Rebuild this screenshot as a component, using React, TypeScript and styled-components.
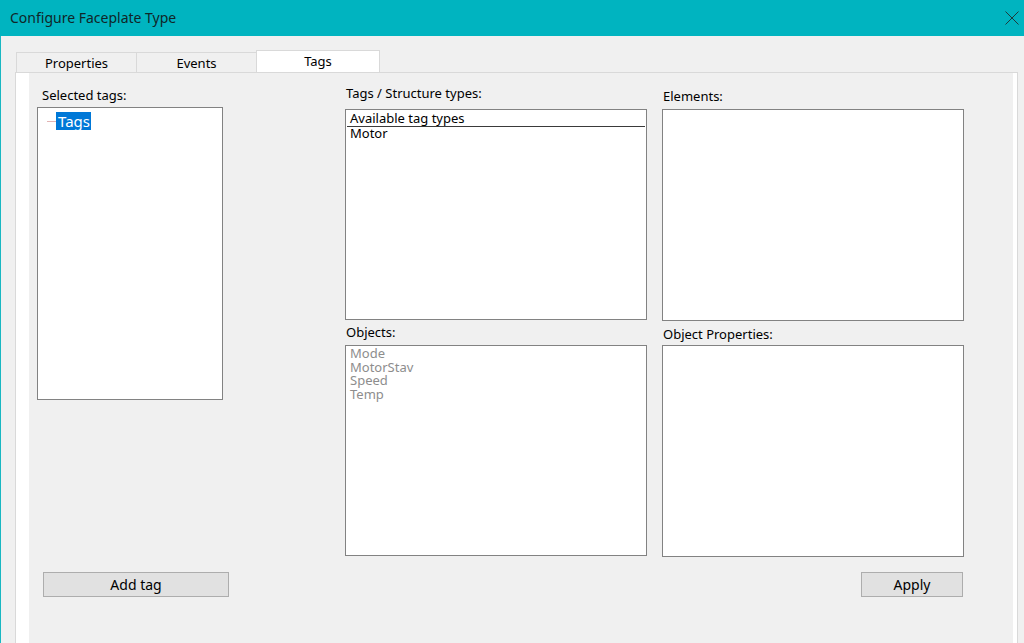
import styled, { createGlobalStyle } from 'styled-components';

const GlobalStyle = createGlobalStyle`
  html, body {
    margin: 0;
    padding: 0;
    background: #f0f0f0;
    overflow: hidden;
  }
  body {
    font-family: 'Noto Sans', 'Segoe UI', sans-serif;
    color: #000;
  }
`;

const objects = ['Mode', 'MotorStav', 'Speed', 'Temp'];
const tabs = ['Properties', 'Events', 'Tags'];

const App = () => {
  return (
    <Window>
      <GlobalStyle />
      <TitleBar>
        <Title>Configure Faceplate Type</Title>
        <CloseBtn aria-label='Close'>
          <svg width='14' height='14' viewBox='0 0 14 14'>
            <path d='M0.5 0.5 L13.5 13.5 M13.5 0.5 L0.5 13.5' stroke='#1d3b3d' strokeWidth='1' fill='none' />
          </svg>
        </CloseBtn>
      </TitleBar>
      <TabStrip>
        {tabs.map((tab) => (
          <Tab key={tab} $active={tab === 'Tags'}>
            {tab}
          </Tab>
        ))}
      </TabStrip>
      <TabPage>
        <Panel>
          <LeftColumn>
            <Label $indent={5}>Selected tags:</Label>
            <TreeBox>
              <TreeItem>
                <TreeLine />
                <TreeLabel>Tags</TreeLabel>
              </TreeItem>
            </TreeBox>
            <Button $width={186} $offset={6}>
              Add tag
            </Button>
          </LeftColumn>

          <MiddleColumn>
            <Label>Tags / Structure types:</Label>
            <ListBox $top={8} $height={211}>
              <ListHeader>Available tag types</ListHeader>
              <ListItem>Motor</ListItem>
            </ListBox>
            <Label $top={4}>Objects:</Label>
            <ListBox $top={5} $height={211}>
              {objects.map((item) => (
                <ListItem key={item} $disabled>
                  {item}
                </ListItem>
              ))}
            </ListBox>
          </MiddleColumn>

          <RightColumn>
            <Label>Elements:</Label>
            <ListBox $top={5} $height={212} />
            <Label $top={5}>Object Properties:</Label>
            <ListBox $top={3} $height={212} />
            <ButtonRow>
              <Button $width={102}>Apply</Button>
            </ButtonRow>
          </RightColumn>
        </Panel>
      </TabPage>
    </Window>
  );
};

const Window = styled.div`
  width: 1024px;
  height: 643px;
  display: flex;
  flex-direction: column;
  box-sizing: border-box;
  border-left: 1px solid #19b7c2;
  background: #f0f0f0;
`;

const TitleBar = styled.div`
  height: 36px;
  flex-shrink: 0;
  margin-left: -1px;
  background: #00b4c0;
  display: flex;
  align-items: center;
  justify-content: space-between;
  padding: 0 5px 0 10px;
`;

const Title = styled.span`
  font-size: 14px;
  color: #102628;
  padding-bottom: 1px;
`;

const CloseBtn = styled.div`
  width: 14px;
  height: 14px;
  margin-top: -1px;
  display: flex;
`;

const TabStrip = styled.div`
  height: 36px;
  flex-shrink: 0;
  display: flex;
  align-items: flex-end;
  padding-left: 16px;
`;

const Tab = styled.div<{ $active?: boolean }>`
  width: ${({ $active }) => ($active ? '124px' : '121px')};
  height: ${({ $active }) => ($active ? '22px' : '20px')};
  box-sizing: border-box;
  display: flex;
  align-items: center;
  justify-content: center;
  font-size: 13px;
  background: ${({ $active }) => ($active ? '#ffffff' : '#f0f0f0')};
  border: 1px solid #d9d9d9;
  border-bottom: none;
  margin-left: -1px;
  padding-bottom: ${({ $active }) => ($active ? '2px' : '0')};
  position: relative;
  z-index: ${({ $active }) => ($active ? 1 : 0)};
`;

const TabPage = styled.div`
  flex: 1;
  margin-left: 14px;
  width: 1003px;
  box-sizing: border-box;
  border: 1px solid #d9d9d9;
  border-bottom: none;
  background: #ffffff;
  padding: 0 4px 0 13px;
  display: flex;
`;

const Panel = styled.div`
  flex: 1;
  background: #f0f0f0;
  display: flex;
  padding-left: 8px;
`;

const Column = styled.div`
  display: flex;
  flex-direction: column;
`;

const LeftColumn = styled(Column)`
  width: 192px;
  padding-top: 14px;
`;

const MiddleColumn = styled(Column)`
  width: 302px;
  margin-left: 116px;
  padding-top: 12px;
`;

const RightColumn = styled(Column)`
  width: 302px;
  margin-left: 15px;
  padding-top: 15px;
`;

const Label = styled.div<{ $top?: number; $indent?: number }>`
  font-size: 13px;
  line-height: 16px;
  height: 16px;
  padding-left: ${({ $indent }) => $indent ?? 1}px;
  margin-top: ${({ $top }) => $top ?? 0}px;
  white-space: nowrap;
`;

const TreeBox = styled.div`
  width: 186px;
  height: 293px;
  box-sizing: border-box;
  margin-top: 4px;
  background: #ffffff;
  border: 1px solid #828282;
  padding: 4px 0 0 9px;
`;

const TreeItem = styled.div`
  display: flex;
  align-items: center;
  height: 18px;
`;

const TreeLine = styled.span`
  width: 9px;
  height: 0;
  border-top: 1px solid #e2b4b4;
`;

const TreeLabel = styled.span`
  background: #0078d7;
  color: #ffffff;
  font-size: 15px;
  line-height: 18px;
  padding: 0 1px 0 2px;
`;

const ListBox = styled.div<{ $top: number; $height: number }>`
  width: 302px;
  height: ${({ $height }) => $height}px;
  box-sizing: border-box;
  margin-top: ${({ $top }) => $top}px;
  background: #ffffff;
  border: 1px solid #828282;
  padding: 1px 1px 0 1px;
`;

const ListHeader = styled.div`
  font-size: 13px;
  line-height: 14px;
  height: 15px;
  padding-left: 3px;
  border-bottom: 1px solid #3a3a3a;
`;

const ListItem = styled.div<{ $disabled?: boolean }>`
  font-size: 13px;
  line-height: 13.5px;
  padding-left: 3px;
  color: ${({ $disabled }) => ($disabled ? '#8d8d8d' : '#000000')};
`;

const ButtonRow = styled.div`
  display: flex;
  justify-content: flex-end;
  padding-right: 1px;
  margin-top: 15px;
`;

const Button = styled.button<{ $width: number; $offset?: number }>`
  width: ${({ $width }) => $width}px;
  height: 25px;
  margin: 0 0 0 ${({ $offset }) => $offset ?? 0}px;
  box-sizing: border-box;
  background: #e1e1e1;
  border: 1px solid #adadad;
  font-family: 'Noto Sans', 'Segoe UI', sans-serif;
  font-size: 14px;
  color: #000;
  padding: 0 0 1px 0;
  ${LeftColumn} & {
    margin-top: 172px;
  }
`;

export default App;
